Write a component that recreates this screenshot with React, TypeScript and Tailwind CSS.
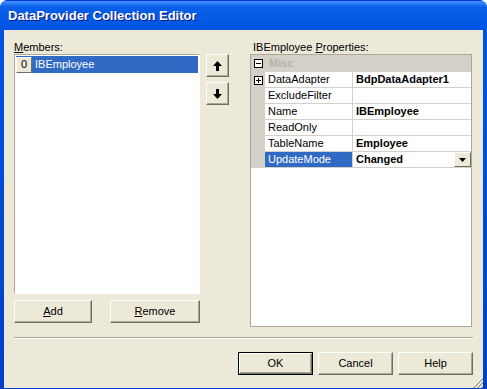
import React from "react"

const font = "font-['Liberation_Sans',Arial,sans-serif]"

const Btn = ({ children, w, def }: { children: React.ReactNode; w: string; def?: boolean }) => (
  <div className={`${w} h-[23px] ${def ? "border border-black" : ""} flex`}>
    <div className="flex-1 flex items-center justify-center border border-t-white border-l-white border-r-[#716f64] border-b-[#716f64] bg-[#ece9d8] shadow-[inset_-1px_-1px_0_#aca899] text-[11px] text-black">
      {children}
    </div>
  </div>
)

const Arrow = ({ down }: { down?: boolean }) => (
  <svg width="9" height="10" viewBox="0 0 9 10" className={down ? "rotate-180" : ""}>
    <polygon points="4.5,0 9,5 6,5 6,10 3,10 3,5 0,5" fill="#000" />
  </svg>
)

const PlusMinus = ({ plus }: { plus?: boolean }) => (
  <svg width="9" height="9" viewBox="0 0 9 9">
    <rect x="0.5" y="0.5" width="8" height="8" fill="#fff" stroke="#000" />
    <line x1="2" y1="4.5" x2="7" y2="4.5" stroke="#000" />
    {plus && <line x1="4.5" y1="2" x2="4.5" y2="7" stroke="#000" />}
  </svg>
)

const rows = [
  { name: "DataAdapter", value: "BdpDataAdapter1", plus: true },
  { name: "ExcludeFilter", value: "" },
  { name: "Name", value: "IBEmployee" },
  { name: "ReadOnly", value: "" },
  { name: "TableName", value: "Employee" },
  { name: "UpdateMode", value: "Changed", selected: true },
]

export default function App() {
  return (
    <div className={`${font} w-[487px] h-[389px] flex flex-col rounded-t-[8px] overflow-hidden bg-gradient-to-b from-[#0054e3] to-[#0040c8]`}>
      {/* title bar */}
      <div className="h-[30px] shrink-0 flex items-center pl-[8px] bg-gradient-to-b from-[#3d95ff] via-[#0a5fe8] via-[20%] to-[#0054e3] border-t border-[#0831d9]">
        <span className="text-white font-bold text-[13px] [text-shadow:1px_1px_0_#0a1883]">
          DataProvider Collection Editor
        </span>
      </div>

      {/* body */}
      <div className="flex-1 mx-[4px] mb-[4px] bg-[#ece9d8] px-[10px] pt-[11px] flex flex-col text-[11px] text-black">
        <div className="flex">
          {/* members */}
          <div className="w-[186px] flex flex-col">
            <div className="h-[13px] leading-[12px]">
              <span className="underline">M</span>embers:
            </div>
            <div className="h-[240px] bg-white border border-t-[#aca899] border-l-[#aca899] border-r-white border-b-white shadow-[inset_1px_1px_0_#fff] p-[1px]">
              <div className="h-[17px] bg-[#316ac5] flex items-center">
                <div className="w-[16px] h-[16px] flex items-center justify-center bg-[#ece9d8] border border-t-white border-l-white border-r-[#716f64] border-b-[#716f64] text-[11px] text-black">
                  0
                </div>
                <span className="ml-[3px] text-white">IBEmployee</span>
              </div>
            </div>
            <div className="flex justify-between mt-[6px]">
              <Btn w="w-[78px]">
                <span><span className="underline">A</span>dd</span>
              </Btn>
              <Btn w="w-[90px]">
                <span><span className="underline">R</span>emove</span>
              </Btn>
            </div>
          </div>

          {/* arrows */}
          <div className="ml-[6px] w-[23px] pt-[13px] flex flex-col gap-[5px]">
            <div className="h-[23px] flex items-center justify-center border border-t-white border-l-white border-r-[#716f64] border-b-[#716f64] shadow-[inset_-1px_-1px_0_#aca899]">
              <Arrow />
            </div>
            <div className="h-[23px] flex items-center justify-center border border-t-white border-l-white border-r-[#716f64] border-b-[#716f64] shadow-[inset_-1px_-1px_0_#aca899]">
              <Arrow down />
            </div>
          </div>

          {/* properties */}
          <div className="ml-[21px] w-[223px] flex flex-col">
            <div className="h-[13px] leading-[12px] pl-[3px]">
              IBEmployee <span className="underline">P</span>roperties:
            </div>
            <div className="w-[222px] h-[273px] bg-white border border-[#aca899] flex flex-col">
              <div className="h-[17px] bg-[#d4d0c8] flex items-center">
                <div className="w-[14px] flex justify-center">
                  <PlusMinus />
                </div>
                <span className="ml-[4px] font-bold text-[#b5b3a6]">Misc</span>
              </div>
              {rows.map((r) => (
                <div key={r.name} className="h-[16px] flex">
                  <div className="w-[14px] bg-[#d4d0c8] flex items-center justify-center">
                    {r.plus && <PlusMinus plus />}
                  </div>
                  <div
                    className={`w-[88px] border-b border-r border-[#d4d0c8] pl-[3px] flex items-center ${
                      r.selected ? "bg-[#316ac5] text-white" : ""
                    }`}
                  >
                    {r.name}
                  </div>
                  <div className="flex-1 border-b border-[#d4d0c8] pl-[3px] flex items-center font-bold">
                    <span className="flex-1">{r.value}</span>
                    {r.selected && (
                      <div className="w-[17px] h-[15px] flex items-center justify-center bg-[#ece9d8] border border-t-white border-l-white border-r-[#716f64] border-b-[#716f64]">
                        <svg width="7" height="4" viewBox="0 0 7 4">
                          <polygon points="0,0 7,0 3.5,4" fill="#000" />
                        </svg>
                      </div>
                    )}
                  </div>
                </div>
              ))}
            </div>
          </div>
        </div>

        {/* separator */}
        <div className="mt-[10px] w-[459px] h-[2px] border-t border-[#aca899] border-b border-b-white" />

        <div className="mt-[13px] flex justify-end gap-[5px]">
          <Btn w="w-[75px]" def>OK</Btn>
          <Btn w="w-[75px]">Cancel</Btn>
          <Btn w="w-[75px]">Help</Btn>
        </div>

        {/* size grip */}
        <div className="flex-1 flex justify-end items-end -mr-[10px]">
          <svg width="13" height="13" viewBox="0 0 13 13">
            {[0, 4, 8].map((o) => (
              <g key={o}>
                <line x1={13} y1={2 + o} x2={2 + o} y2={13} stroke="#fff" />
                <line x1={13} y1={3 + o} x2={3 + o} y2={13} stroke="#aca899" />
                <line x1={13} y1={4 + o} x2={4 + o} y2={13} stroke="#aca899" />
              </g>
            ))}
          </svg>
        </div>
      </div>
    </div>
  )
}
